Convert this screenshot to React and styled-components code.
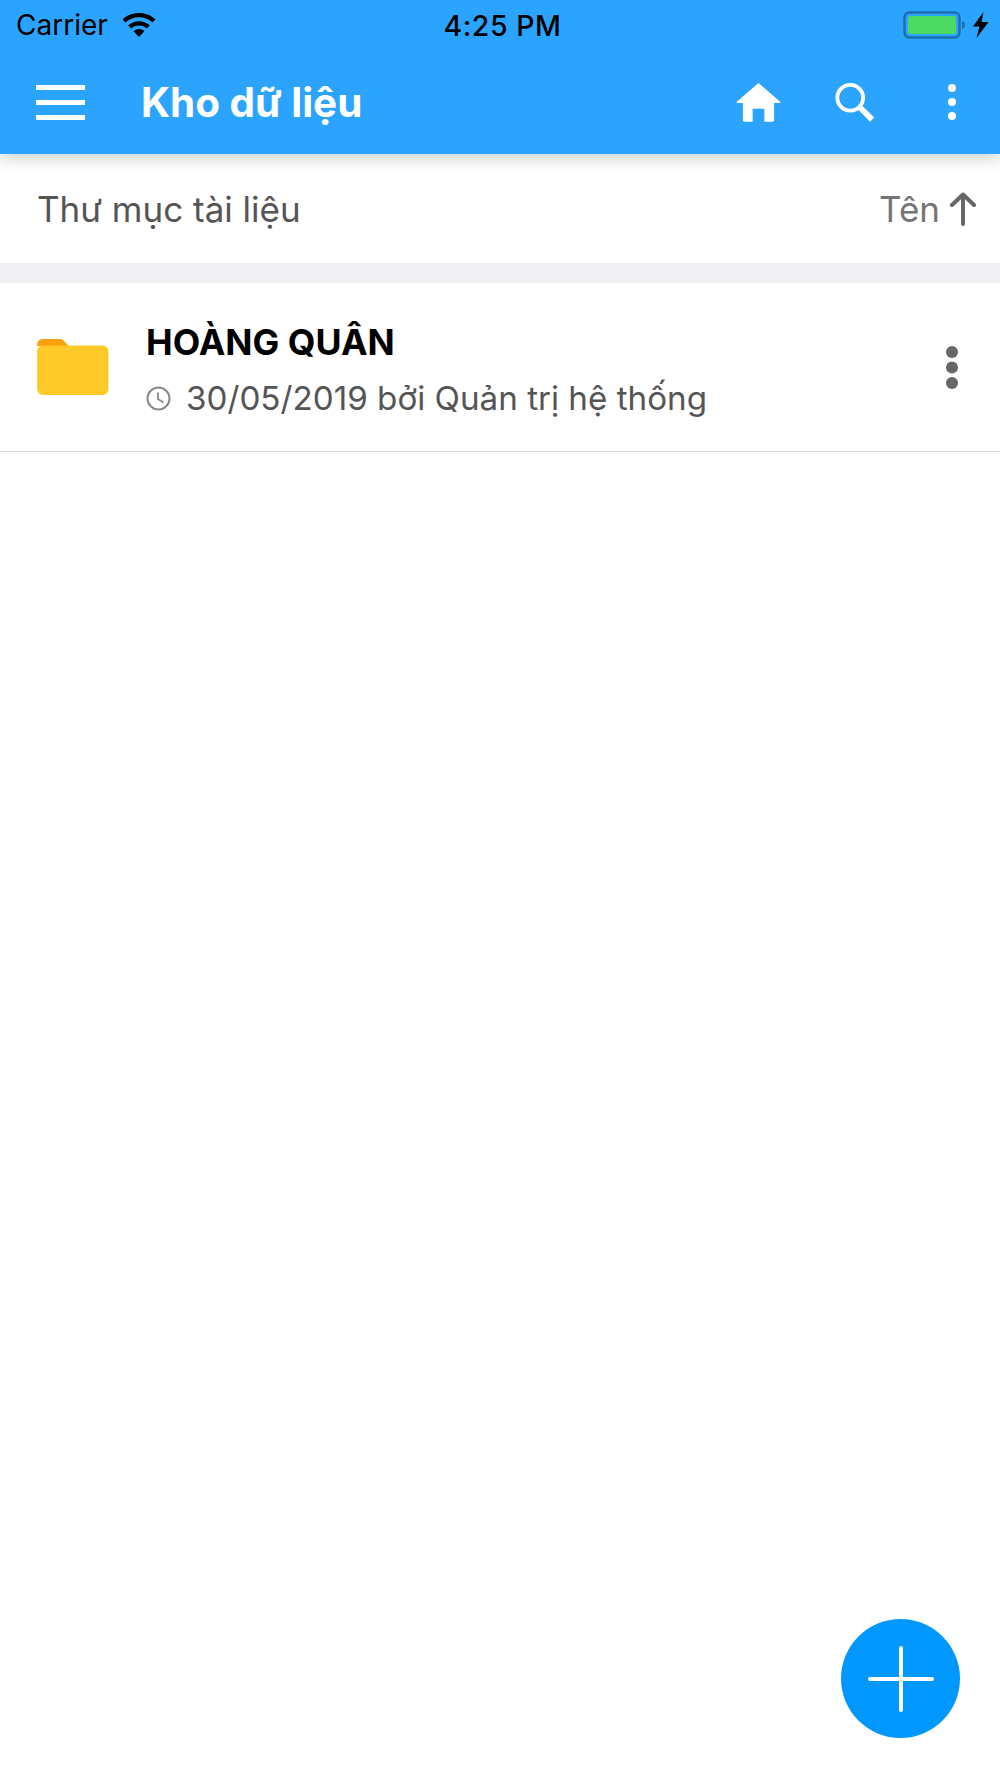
import styled, { createGlobalStyle } from "styled-components";

const GlobalStyle = createGlobalStyle`
  html, body {
    margin: 0;
    padding: 0;
    background: #ffffff;
    font-family: Inter, "Noto Sans", sans-serif;
  }
`;

const Screen = styled.div`
  position: relative;
  width: 1000px;
  height: 1778px;
  overflow: hidden;
  background: #ffffff;
`;

const Header = styled.header`
  position: relative;
  height: 154px;
  background: #2ba4ff;
  box-shadow: 0 4px 16px rgba(0, 0, 0, 0.2);
`;

const StatusBar = styled.div`
  display: grid;
  grid-template-columns: 1fr auto 1fr;
  align-items: center;
  height: 50px;
  padding: 0 11px 0 16px;
  color: #000000;
`;

const StatusLeft = styled.div`
  display: flex;
  align-items: center;
  gap: 14px;
`;

const Carrier = styled.span`
  font-size: 28px;
`;

const Clock = styled.span`
  font-size: 28.4px;
  font-weight: 500;
  letter-spacing: 0.6px;
`;

const StatusRight = styled.div`
  display: flex;
  align-items: center;
  justify-content: flex-end;
  gap: 7px;
`;

const Toolbar = styled.div`
  display: flex;
  align-items: center;
  height: 104px;
  padding: 0 25px 0 36px;
  box-sizing: border-box;
`;

const MenuBars = styled.div`
  display: flex;
  flex-direction: column;
  gap: 10px;
  width: 49px;
  margin-right: 56px;
`;

const MenuBar = styled.span`
  display: block;
  height: 5px;
  background: #ffffff;
`;

const Title = styled.h1`
  flex: 1;
  margin: 0;
  font-size: 40.4px;
  font-weight: 700;
  color: #ffffff;
`;

const ToolbarActions = styled.div`
  display: flex;
  align-items: center;
  gap: 54px;
`;

const SortBar = styled.div`
  display: flex;
  align-items: center;
  justify-content: space-between;
  height: 109px;
  padding: 0 24px 0 37px;
  box-sizing: border-box;
`;

const SortLabel = styled.span`
  font-size: 35px;
  color: ${(p) => p.$color};
`;

const SortControl = styled.div`
  display: flex;
  align-items: center;
  gap: 10px;
`;

const Divider = styled.div`
  height: 20px;
  background: #efeff4;
`;

const Row = styled.div`
  display: flex;
  align-items: center;
  height: 169px;
  padding: 0 33px 0 37px;
  box-sizing: border-box;
  border-bottom: 1px solid #d6d6da;
`;

const FolderWrap = styled.div`
  display: flex;
`;

const RowBody = styled.div`
  flex: 1;
  margin-left: 37px;
  padding-top: 6px;
`;

const RowName = styled.div`
  font-size: 35.7px;
  font-weight: 700;
  color: #000000;
  line-height: 40px;
`;

const RowMeta = styled.div`
  display: flex;
  align-items: center;
  gap: 15px;
  margin-top: 16px;
  font-size: 33.2px;
  line-height: 40px;
  color: #555555;
`;

const Fab = styled.button`
  position: absolute;
  left: 841px;
  top: 1619px;
  display: flex;
  align-items: center;
  justify-content: center;
  width: 119px;
  height: 119px;
  padding: 0;
  border: none;
  border-radius: 50%;
  background: #0098ff;
`;

const Dots = ({ color, r, gap, width }) => (
  <svg width={width} height={gap * 2 + r * 2} viewBox={`0 0 ${width} ${gap * 2 + r * 2}`}>
    {[0, 1, 2].map((i) => (
      <circle key={i} cx={width / 2} cy={r + gap * i} r={r} fill={color} />
    ))}
  </svg>
);

const WifiIcon = () => (
  <svg width="34" height="24" viewBox="0 0 34 24">
    <path
      fill="#000"
      d="M17 0C10.6 0 4.8 2.4 .5 6.4l3 3.2C7 6.3 11.800 4.300 17 4.300s10 2 13.500 5.300l3-3.200C29.200 2.400 23.400 0 17 0z"
    />
    <path
      fill="#000"
      d="M17 8.200c-4.200 0-8 1.600-10.800 4.300l3 3.100c2-1.900 4.800-3.100 7.800-3.100s5.800 1.200 7.800 3.100l3-3.100C25 9.800 21.200 8.200 17 8.200z"
    />
    <path fill="#000" d="M17 16c-2.100 0-4 .8-5.400 2.200L17 24l5.400-5.800C21 16.800 19.100 16 17 16z" />
  </svg>
);

const BatteryIcon = () => (
  <svg width="63" height="28" viewBox="0 0 63 28">
    <rect x="1.500" y="1.500" width="55" height="25" rx="5" fill="none" stroke="#1d6fae" strokeWidth="2.500" />
    <rect x="5" y="5" width="48" height="18" rx="2.500" fill="#4cd964" />
    <path d="M59 10c2 .4 3 2 3 4s-1 3.600-3 4z" fill="#1d6fae" />
  </svg>
);

const BoltIcon = () => (
  <svg width="16" height="26" viewBox="0 0 16 26">
    <path fill="#000" d="M10.500 0L0 14.500h6.500L3.500 26 15.500 10H8.500z" />
  </svg>
);

const HomeIcon = () => (
  <svg width="45" height="39" viewBox="0 0 46 40">
    <path
      fill="#fff"
      d="M23 0L.8 19.200c-.6.600-.2 1.400.5 1.400H7v17.400c0 1 .8 1.800 1.800 1.800H17V26.500h12V39.800h8.200c1 0 1.800-.8 1.800-1.800V20.600h5.700c.7 0 1.100-.8.500-1.400z"
    />
  </svg>
);

const SearchIcon = () => (
  <svg width="40" height="41" viewBox="0 0 42 42">
    <circle cx="16" cy="16" r="13.500" fill="none" stroke="#fff" strokeWidth="4" />
    <path d="M25.500 25.500L39 39" stroke="#fff" strokeWidth="6" />
  </svg>
);

const ArrowUpIcon = () => (
  <svg width="26" height="34" viewBox="0 0 26 34">
    <path
      d="M13 2.500V32M2 13L13 2.500 24 13"
      fill="none"
      stroke="#666"
      strokeWidth="4"
      strokeLinecap="round"
      strokeLinejoin="round"
    />
  </svg>
);

const FolderIcon = () => (
  <svg width="72" height="57" viewBox="0 0 73 58">
    <path fill="#ff9f0a" d="M0 6c0-3.300 2.700-6 6-6h17c1.700 0 3.300.7 4.400 2L32 7H0z" />
    <rect x="0" y="6.500" width="72.500" height="50.500" rx="6" fill="#ffca28" />
  </svg>
);

const ClockIcon = () => (
  <svg width="25" height="25" viewBox="0 0 25 25">
    <circle cx="12.500" cy="12.500" r="11" fill="none" stroke="#8a8a8a" strokeWidth="2" />
    <path d="M12 6.500V13l5.500 3.500" fill="none" stroke="#8a8a8a" strokeWidth="1.800" />
  </svg>
);

const PlusIcon = () => (
  <svg width="66" height="66" viewBox="0 0 66 66">
    <path d="M33 2V64M2 33H64" stroke="#fff" strokeWidth="4" strokeLinecap="round" />
  </svg>
);

const App = () => {
  return (
    <Screen>
      <GlobalStyle />
      <Header>
        <StatusBar>
          <StatusLeft>
            <Carrier>Carrier</Carrier>
            <WifiIcon />
          </StatusLeft>
          <Clock>4:25 PM</Clock>
          <StatusRight>
            <BatteryIcon />
            <BoltIcon />
          </StatusRight>
        </StatusBar>
        <Toolbar>
          <MenuBars>
            <MenuBar />
            <MenuBar />
            <MenuBar />
          </MenuBars>
          <Title>Kho dữ liệu</Title>
          <ToolbarActions>
            <HomeIcon />
            <SearchIcon />
            <Dots color="#ffffff" r={4} gap={14} width={46} />
          </ToolbarActions>
        </Toolbar>
      </Header>
      <SortBar>
        <SortLabel $color="#555555">Thư mục tài liệu</SortLabel>
        <SortControl>
          <SortLabel $color="#757575">Tên</SortLabel>
          <ArrowUpIcon />
        </SortControl>
      </SortBar>
      <Divider />
      <Row>
        <FolderWrap>
          <FolderIcon />
        </FolderWrap>
        <RowBody>
          <RowName>HOÀNG QUÂN</RowName>
          <RowMeta>
            <ClockIcon />
            30/05/2019 bởi Quản trị hệ thống
          </RowMeta>
        </RowBody>
        <Dots color="#666666" r={6} gap={15.500} width={30} />
      </Row>
      <Fab>
        <PlusIcon />
      </Fab>
    </Screen>
  );
};

export default App;
